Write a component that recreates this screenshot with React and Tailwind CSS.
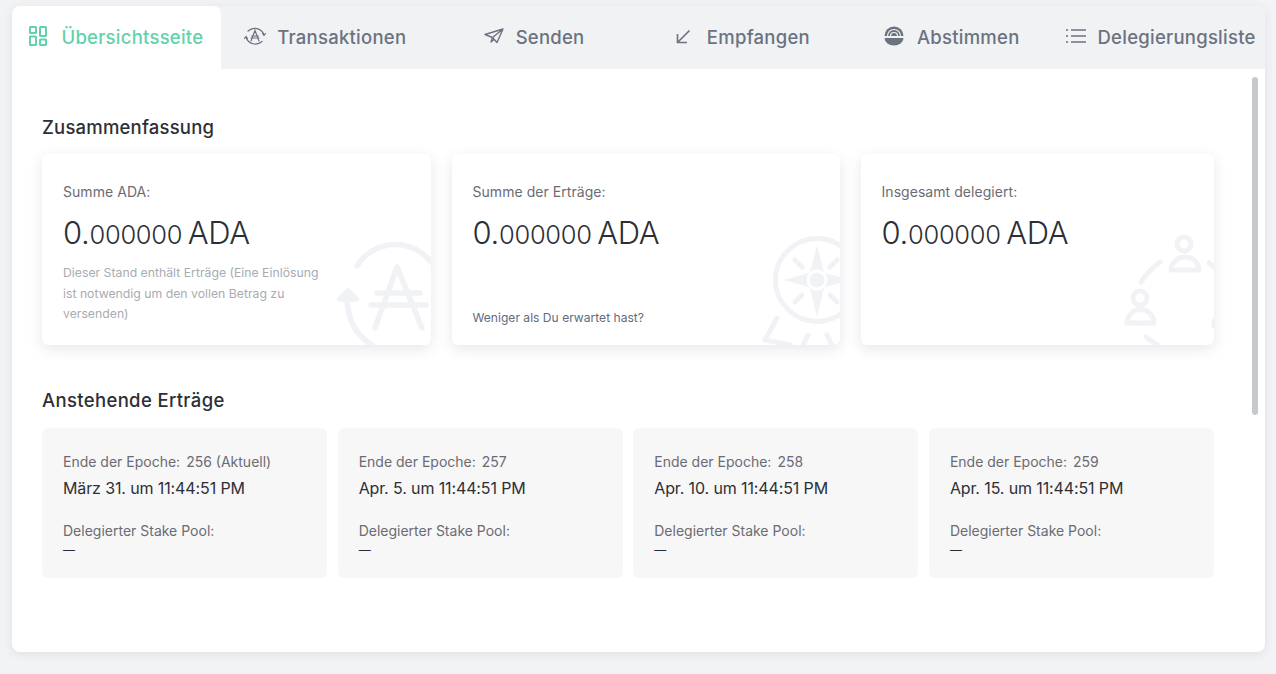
const font = { fontFamily: "Inter, 'Noto Sans', sans-serif" };

const GridIcon = () => (
  <svg width="18" height="20" viewBox="0 0 18 20" fill="none" stroke="#62d2ab" strokeWidth="2">
    <rect x="1" y="1" width="6" height="6" rx="0.5" />
    <rect x="11" y="1" width="6" height="9" rx="0.5" />
    <rect x="1" y="10.5" width="6" height="8.5" rx="0.5" />
    <rect x="11" y="13.5" width="6" height="5.5" rx="0.5" />
  </svg>
);

const TransIcon = () => (
  <svg width="22" height="22" viewBox="0 0 22 22" fill="none" stroke="#6b7280" strokeWidth="1.2" strokeLinecap="round">
    <path d="M4 6A10 10 0 0 1 20 9.5" />
    <path d="M18 16.5A10 10 0 0 1 2 12.5" />
    <path d="M0.5 13.5L2 11.5l1.5 2M18.5 8.5l1.5 2 1.5-2" />
    <path d="M7 16L11 5.5 15 16M7.5 11h7M7 13h8" />
  </svg>
);

const SendIcon = () => (
  <svg width="20" height="16" viewBox="0 0 20 16" fill="none" stroke="#6b7280" strokeWidth="1.4" strokeLinejoin="round">
    <path d="M1 6.5L19 1l-6 13.5L8.5 9.5zM8.5 9.5L19 1M8.5 9.5L7 14l3-2.5" />
  </svg>
);

const ReceiveIcon = () => (
  <svg width="15" height="15" viewBox="0 0 15 15" fill="none" stroke="#6b7280" strokeWidth="1.6">
    <path d="M13.5 1.5L1.5 13.5M1.5 5v8.5H11" />
  </svg>
);

const VoteIcon = () => (
  <svg width="20" height="20" viewBox="0 0 20 20" fill="none">
    <path d="M0.5 10a9.5 9.5 0 0 1 19 0z" fill="#6b7280" />
    <path d="M3.5 10a6.5 6.5 0 0 1 13 0M6.5 10a3.5 3.5 0 0 1 7 0" stroke="#f0f2f4" strokeWidth="1.2" />
    <path d="M0.5 12h19a9.5 7.5 0 0 1-19 0z" fill="#6b7280" />
  </svg>
);

const ListIcon = () => (
  <svg width="20" height="16" viewBox="0 0 20 16" fill="none" stroke="#6b7280" strokeWidth="1.4">
    <path d="M5 2h15M5 8h15M5 14h15" />
    <path d="M0 2h2M0 8h2M0 14h2" />
  </svg>
);

const tabs = [
  { label: "Übersichtsseite", icon: <GridIcon />, gap: "gap-[14px]", active: true },
  { label: "Transaktionen", icon: <TransIcon />, gap: "gap-[11px]" },
  { label: "Senden", icon: <SendIcon />, gap: "gap-[12px]" },
  { label: "Empfangen", icon: <ReceiveIcon />, gap: "gap-[16px]" },
  { label: "Abstimmen", icon: <VoteIcon />, gap: "gap-[13px]" },
  { label: "Delegierungsliste", icon: <ListIcon />, gap: "gap-[12px]" },
];

const epochs = [
  { epoch: "256 (Aktuell)", date: "März 31. um 11:44:51 PM" },
  { epoch: "257", date: "Apr. 5. um 11:44:51 PM" },
  { epoch: "258", date: "Apr. 10. um 11:44:51 PM" },
  { epoch: "259", date: "Apr. 15. um 11:44:51 PM" },
];

const AdaMark = () => (
  <svg width="96" height="104" viewBox="0 0 96 104" fill="none" stroke="#f0f2f5" strokeWidth="5.5" strokeLinecap="round" strokeLinejoin="round" className="absolute right-0 bottom-0">
    <path d="M22 25A45 45 0 0 1 96 21" />
    <path d="M12 59C13 80 22 95 37 104" />
    <path d="M13 50L5 58h16z" fill="#f0f2f5" />
    <path d="M40 87L62 26l25 61" />
    <path d="M42 52h43M36 64h55" />
  </svg>
);

const CompassMark = () => (
  <svg width="80" height="112" viewBox="0 0 80 112" fill="none" stroke="#f0f2f5" strokeWidth="5" strokeLinecap="round" strokeLinejoin="round" className="absolute right-0 bottom-0">
    <circle cx="57" cy="47" r="41.5" />
    <path d="M57 12l9 35-9 37-9-37z" fill="#f0f2f5" stroke="none" />
    <path d="M23 47l34-9 34 9-34 9z" fill="#f0f2f5" stroke="none" />
    <circle cx="57" cy="47" r="9" fill="#f0f2f5" stroke="#ffffff" strokeWidth="3" />
    <path d="M35 27l7 7M77 27l-7 7M35 69l7-7M77 69l-7-7" />
    <path d="M17 85L5 107l26 5M48 102l-5 10M67 102l5 10" />
  </svg>
);

const PeopleMark = () => (
  <svg width="92" height="112" viewBox="0 0 92 112" fill="none" stroke="#f0f2f5" strokeWidth="5" strokeLinecap="round" strokeLinejoin="round" className="absolute right-0 bottom-0">
    <circle cx="62" cy="11" r="7" />
    <path d="M49 37a14 13 0 0 1 28 0z" />
    <circle cx="18" cy="65" r="7" />
    <path d="M5 90a13.5 13.5 0 0 1 27 0z" />
    <path d="M38 29Q26 38 19 49" />
    <path d="M87 30l5 4M24 104q5 4 12 8M92 88v5" />
  </svg>
);

const SummaryCard = ({ title, className = "", children, mark }) => (
  <div className={`relative h-[191px] overflow-hidden rounded-[6px] bg-white px-[21px] pt-[29px] shadow-[0_4px_14px_rgba(60,70,90,0.13)] ${className}`}>
    {mark}
    <p className="text-[14px] leading-[18px] tracking-[0.05px] text-[#6b6b73]">{title}</p>
    <p className="mt-[12px] text-[31px] leading-[40px] font-light tracking-[-0.3px] text-[#2d2f36]">
      0.<span className="-mr-[3px] text-[25.5px]">000000</span> ADA
    </p>
    {children}
  </div>
);

export default function App() {
  return (
    <div style={font} className="h-[674px] bg-[#f1f3f5] pt-[6px] pr-[11px] pl-[12px]">
      <div className="relative h-[646px] overflow-hidden rounded-[8px] bg-white shadow-[0_2px_10px_rgba(60,70,90,0.1)]">
        <div className="grid h-[63px] grid-cols-6 bg-[#f0f2f4]">
          {tabs.map((tab) => (
            <div
              key={tab.label}
              className={`flex items-center justify-center ${tab.gap} ${tab.active ? "rounded-t-[8px] bg-white text-[#62d2ab]" : "text-[#6b7280]"}`}
            >
              <span className="-mt-[3px]">{tab.icon}</span>
              <span className="-mt-[1px] text-[18.5px] leading-[24px] font-medium tracking-[0.25px] whitespace-nowrap">{tab.label}</span>
            </div>
          ))}
        </div>

        {/* scrollbar thumb */}
        <div className="absolute top-[71px] right-[7px] h-[338px] w-[6px] rounded-[3px] bg-[#c6c9cc]" />

        <div className="pt-[46px] pl-[30px] pr-[51px]">
          <h2 className="text-[18.5px] leading-[24px] font-medium tracking-[0.2px] text-[#2d2f36]">Zusammenfassung</h2>
          <div className="mt-[15px] flex gap-[20.5px]">
            <SummaryCard title="Summe ADA:" mark={<AdaMark />} className="w-[389px] shrink-0">
              <p className="mt-[8px] w-[270px] text-[12.25px] leading-[20.5px] text-[#a9abb2]">
                Dieser Stand enthält Erträge (Eine Einlösung ist notwendig um den vollen Betrag zu versenden)
              </p>
            </SummaryCard>
            <SummaryCard title="Summe der Erträge:" mark={<CompassMark />} className="w-[388.5px] shrink-0">
              <p className="absolute bottom-[18px] left-[21px] text-[12.1px] leading-[18px] text-[#646b7c]">
                Weniger als Du erwartet hast?
              </p>
            </SummaryCard>
            <SummaryCard title="Insgesamt delegiert:" mark={<PeopleMark />} className="flex-1" />
          </div>

          <h2 className="mt-[43px] text-[18.5px] leading-[24px] font-medium tracking-[0.35px] text-[#2d2f36]">Anstehende Erträge</h2>
          <div className="mt-[16px] grid grid-cols-4 gap-[10.5px]">
            {epochs.map((item) => (
              <div key={item.epoch} className="h-[150px] rounded-[6px] bg-[#f7f7f8] px-[21px] pt-[25px]">
                <p className="text-[14px] leading-[18px] text-[#6b6b73]">
                  Ende der Epoche:<span className="ml-[6px]">{item.epoch}</span>
                </p>
                <p className="mt-[7px] text-[16px] leading-[20px] tracking-[-0.12px] text-[#2d2f36]">{item.date}</p>
                <p className="mt-[24px] text-[14px] leading-[18px] text-[#6b6b73]">Delegierter Stake Pool:</p>
                <p className="text-[12px] leading-[20px] text-[#2d2f36]">—</p>
              </div>
            ))}
          </div>
        </div>
      </div>
    </div>
  );
}
